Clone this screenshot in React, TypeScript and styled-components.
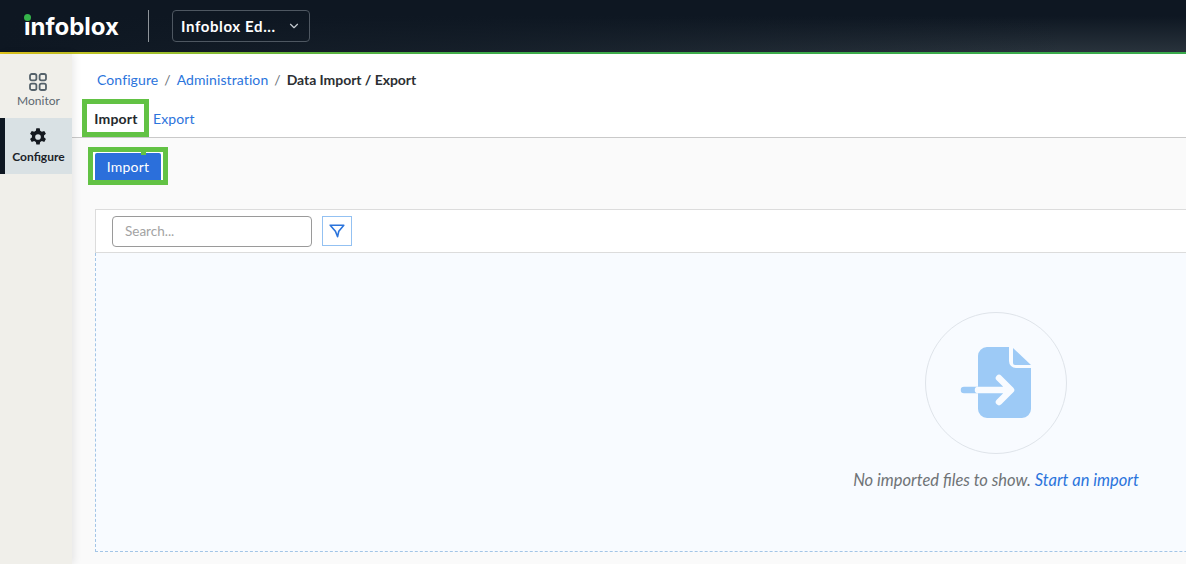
import React from "react";
import styled, { createGlobalStyle } from "styled-components";
import { ChevronDown } from "lucide-react";

const GlobalStyle = createGlobalStyle`
  html, body {
    margin: 0;
    padding: 0;
    height: 564px;
    overflow: hidden;
    background: #fafafa;
    font-family: Lato, "Liberation Sans", sans-serif;
  }
`;

const Page = styled.div`
  width: 1186px;
  height: 564px;
  display: flex;
  flex-direction: column;
  overflow: hidden;
`;

const Header = styled.header`
  height: 54px;
  flex: none;
  display: flex;
  align-items: center;
  padding: 0 0 2px 24px;
  box-sizing: border-box;
  background:
    linear-gradient(90deg, #0e1722 0%, rgba(14, 23, 34, 0.7) 40%, rgba(14, 23, 34, 0) 90%),
    linear-gradient(180deg, #0e1722 0%, #0e1722 30%, #2a343d 100%);
  position: relative;
  &::after {
    content: "";
    position: absolute;
    left: 0;
    right: 0;
    bottom: 0;
    height: 2px;
    background: linear-gradient(90deg, #e2c61d 0%, #a6c02a 12%, #62b43e 25%, #3eab4a 40%, #39aa4c 100%);
  }
`;

const Logo = styled.div`
  position: relative;
  width: 101px;
  color: #ffffff;
  font-family: Inter, "Open Sans", sans-serif;
  font-size: 24px;
  font-weight: 700;
  letter-spacing: 0;
  line-height: 26px;
  margin-top: 1px;
`;

const LogoDot = styled.span`
  position: absolute;
  left: 0;
  top: 0;
  width: 7px;
  height: 7px;
  border-radius: 50%;
  background: #35b44a;
  box-shadow: 0 0 0 1px #0e1722;
`;

const HeaderDivider = styled.div`
  width: 1px;
  height: 32px;
  background: #8e949a;
  margin: 0 23px;
`;

const ContextSelect = styled.div`
  width: 138px;
  height: 32px;
  box-sizing: border-box;
  border: 1px solid #4e5761;
  border-radius: 4px;
  display: flex;
  align-items: center;
  justify-content: space-between;
  padding: 0 8px;
  color: #ffffff;
  font-size: 15px;
  font-weight: 700;
  letter-spacing: 0.62px;
`;

const Body = styled.div`
  flex: 1;
  display: flex;
  min-height: 0;
`;

const Sidebar = styled.nav`
  width: 72px;
  flex: none;
  background: #f0efea;
  padding-top: 8px;
  box-sizing: border-box;
  box-shadow: 2px 0 8px rgba(0, 0, 0, 0.09);
  position: relative;
  z-index: 1;
`;

const NavItem = styled.div<{ $active?: boolean }>`
  height: 56px;
  box-sizing: border-box;
  display: flex;
  flex-direction: column;
  align-items: center;
  justify-content: center;
  gap: 2px;
  font-size: 12px;
  line-height: 15px;
  color: ${(p) => (p.$active ? "#1b2228" : "#5c6770")};
  font-weight: ${(p) => (p.$active ? 700 : 400)};
  background: ${(p) => (p.$active ? "#d9e1e4" : "transparent")};
  border-left: 5px solid ${(p) => (p.$active ? "#0e1722" : "transparent")};
  padding-bottom: ${(p) => (p.$active ? "2px" : "0")};
`;

const NavIconSlot = styled.span`
  display: flex;
  margin-left: -1px;
`;

const Main = styled.main`
  flex: 1;
  min-width: 0;
  overflow: hidden;
  display: flex;
  flex-direction: column;
`;

const TopArea = styled.div`
  background: #ffffff;
  height: 84px;
  flex: none;
  box-sizing: border-box;
  border-bottom: 1px solid #c9c9c9;
  padding: 17px 0 0 10px;
`;

const Breadcrumb = styled.div`
  display: flex;
  align-items: center;
  gap: 6px;
  font-size: 14px;
  line-height: 18px;
  padding-left: 15px;
  height: 18px;
`;

const CrumbLink = styled.a`
  color: #2b74dc;
  letter-spacing: 0.1px;
`;

const CrumbSep = styled.span`
  color: #6b7278;
`;

const CrumbCurrent = styled.span`
  color: #2c2f33;
  font-weight: 700;
  letter-spacing: -0.05px;
`;

const Tabs = styled.div`
  display: flex;
  align-items: center;
  margin-top: 10px;
`;

const ActiveTab = styled.div`
  width: 67px;
  height: 38px;
  box-sizing: border-box;
  border: 5px solid #62c244;
  display: flex;
  align-items: center;
  justify-content: center;
  padding-left: 1px;
  font-size: 14px;
  font-weight: 700;
  letter-spacing: 0.2px;
  color: #24282c;
`;

const TabLink = styled.a`
  font-size: 14px;
  color: #2b74dc;
  margin-left: 4px;
  letter-spacing: 0.1px;
`;

const Actions = styled.div`
  flex: none;
  padding: 9px 0 0 16px;
  height: 71px;
  box-sizing: border-box;
`;

const ButtonFrame = styled.div`
  position: relative;
  width: 80px;
  height: 38px;
  box-sizing: border-box;
  border: 5px solid #62c244;
  background: #ffffff;
  padding: 1px 2px 0;
  &::after {
    content: "";
    position: absolute;
    left: 48px;
    top: 0;
    width: 5px;
    height: 3px;
    background: #62c244;
  }
`;

const PrimaryButton = styled.button`
  display: block;
  width: 100%;
  height: 100%;
  border: 0;
  border-radius: 2px 2px 0 0;
  background: #2b6fdb;
  color: #ffffff;
  font-family: inherit;
  font-size: 14px;
  letter-spacing: 0.2px;
  padding: 0;
`;

const Card = styled.section`
  width: 1802px;
  margin-left: 23px;
  flex: none;
`;

const Toolbar = styled.div`
  height: 44px;
  box-sizing: border-box;
  background: #ffffff;
  border: 1px solid #dcdcdc;
  display: flex;
  align-items: center;
  gap: 10px;
  padding: 0 16px;
`;

const SearchInput = styled.input`
  width: 200px;
  height: 31px;
  box-sizing: border-box;
  border: 1px solid #9a9a9a;
  border-radius: 4px;
  background: #ffffff;
  padding: 0 12px;
  font-family: inherit;
  font-size: 13.5px;
  &::placeholder {
    color: #a3a3a3;
    opacity: 1;
  }
`;

const FilterButton = styled.div`
  width: 30px;
  height: 30px;
  box-sizing: border-box;
  border: 1px solid #93c1f2;
  display: flex;
  align-items: center;
  justify-content: center;
`;

const EmptyState = styled.div`
  height: 299px;
  box-sizing: border-box;
  background: #f8fbff;
  border: 1px dashed #a3c5e6;
  border-top: 0;
  display: flex;
  flex-direction: column;
  align-items: center;
  padding-top: 59px;
`;

const IconCircle = styled.div`
  width: 142px;
  height: 142px;
  box-sizing: border-box;
  border: 1px solid #dfe4ea;
  border-radius: 50%;
  display: flex;
  align-items: center;
  justify-content: center;
`;

const EmptyText = styled.p`
  margin: 15px 0 0;
  font-size: 16.5px;
  line-height: 22px;
  font-style: italic;
  color: #6f7376;
`;

const EmptyLink = styled.a`
  color: #2b74dc;
`;

const MonitorIcon = () => (
  <svg width="18" height="18" viewBox="0 0 18 18" fill="none" stroke="#55626b" strokeWidth="1.8" aria-hidden="true">
    <rect x="1" y="1" width="6.4" height="6.4" rx="1.8" />
    <rect x="10.6" y="1" width="6.4" height="6.4" rx="1.8" />
    <rect x="1" y="10.6" width="6.4" height="6.4" rx="1.8" />
    <rect x="10.6" y="10.6" width="6.4" height="6.4" rx="1.8" />
  </svg>
);

const GearIcon = () => (
  <svg width="20" height="20" viewBox="0 0 24 24" fill="#14191f" aria-hidden="true">
    <path
      fillRule="evenodd"
      d="M10 1.5h4l.6 3a8 8 0 0 1 2 1.2l2.9-1 2 3.4-2.3 2a8 8 0 0 1 0 2.3l2.3 2-2 3.5-2.9-1a8 8 0 0 1-2 1.1l-.6 3h-4l-.6-3a8 8 0 0 1-2-1.1l-2.9 1-2-3.5 2.3-2a8 8 0 0 1 0-2.3l-2.3-2 2-3.4 2.9 1a8 8 0 0 1 2-1.2zM12 8.6a3.4 3.4 0 1 0 0 6.8 3.4 3.4 0 0 0 0-6.8z"
    />
  </svg>
);

const FilterIcon = () => (
  <svg width="16" height="14" viewBox="0 0 16 14" fill="none" aria-hidden="true">
    <path
      d="M1.2 1.2h13.6L9.8 7.2 8.6 12.6 6.4 7.2z"
      stroke="#2b74dc"
      strokeWidth="1.6"
      strokeLinejoin="round"
    />
  </svg>
);

const ImportFileIcon = () => (
  <svg width="72" height="72" viewBox="0 0 72 72" aria-hidden="true">
    <path
      d="M27 0H49V14a7 7 0 0 0 7 7H71V62a9 9 0 0 1-9 9H27a9 9 0 0 1-9-9V9a9 9 0 0 1 9-9z"
      fill="#9dcaf6"
    />
    <path d="M53 1 71 18H55a2 2 0 0 1-2-2z" fill="#9dcaf6" />
    <path d="M4 43h14" stroke="#9dcaf6" strokeWidth="6.5" strokeLinecap="round" />
    <path
      d="M18 43h32M39 31l12 12-12 12"
      fill="none"
      stroke="#f8fbff"
      strokeWidth="6.5"
      strokeLinecap="round"
      strokeLinejoin="round"
    />
  </svg>
);

const App: React.FC = () => {
  return (
    <Page>
      <GlobalStyle />
      <Header>
        <Logo>
          <LogoDot />
          infoblox
        </Logo>
        <HeaderDivider />
        <ContextSelect>
          Infoblox Ed...
          <ChevronDown size={14} strokeWidth={2} color="#c5cad0" />
        </ContextSelect>
      </Header>
      <Body>
        <Sidebar>
          <NavItem>
            <NavIconSlot>
              <MonitorIcon />
            </NavIconSlot>
            Monitor
          </NavItem>
          <NavItem $active>
            <NavIconSlot>
              <GearIcon />
            </NavIconSlot>
            Configure
          </NavItem>
        </Sidebar>
        <Main>
          <TopArea>
            <Breadcrumb>
              <CrumbLink>Configure</CrumbLink>
              <CrumbSep>/</CrumbSep>
              <CrumbLink>Administration</CrumbLink>
              <CrumbSep>/</CrumbSep>
              <CrumbCurrent>Data Import / Export</CrumbCurrent>
            </Breadcrumb>
            <Tabs>
              <ActiveTab>Import</ActiveTab>
              <TabLink>Export</TabLink>
            </Tabs>
          </TopArea>
          <Actions>
            <ButtonFrame>
              <PrimaryButton>Import</PrimaryButton>
            </ButtonFrame>
          </Actions>
          <Card>
            <Toolbar>
              <SearchInput placeholder="Search..." readOnly />
              <FilterButton>
                <FilterIcon />
              </FilterButton>
            </Toolbar>
            <EmptyState>
              <IconCircle>
                <ImportFileIcon />
              </IconCircle>
              <EmptyText>
                No imported files to show. <EmptyLink>Start an import</EmptyLink>
              </EmptyText>
            </EmptyState>
          </Card>
        </Main>
      </Body>
    </Page>
  );
};

export default App;
